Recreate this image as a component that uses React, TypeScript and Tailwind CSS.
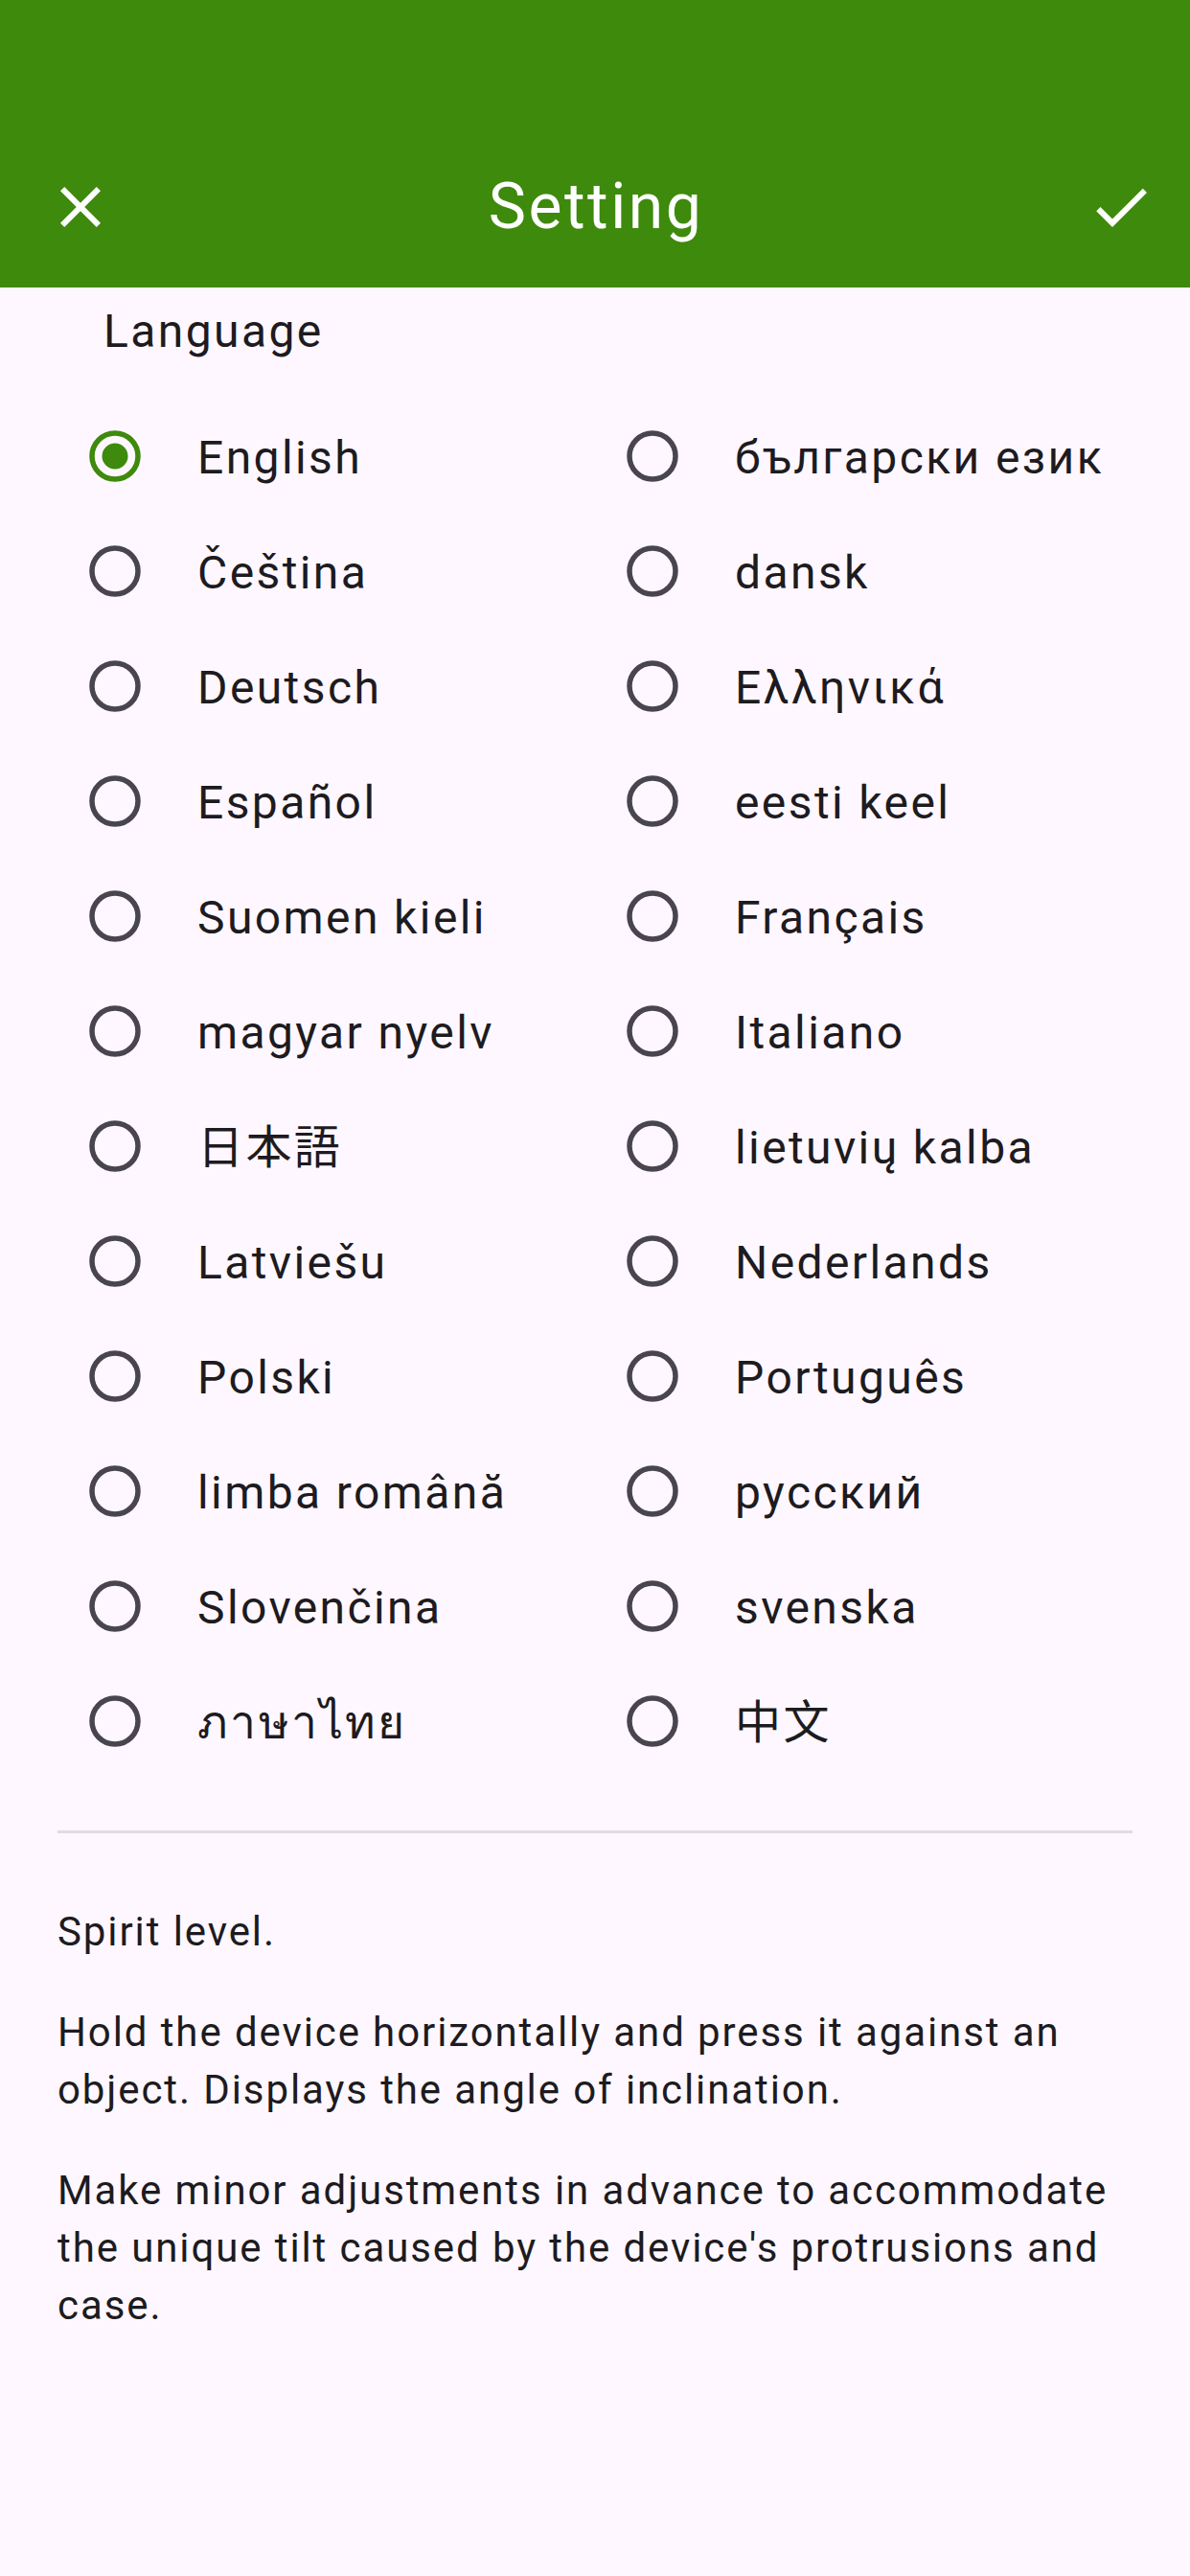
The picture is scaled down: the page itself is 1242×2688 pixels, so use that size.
import { useState } from 'react';

const LANGUAGES: [string, string][] = [
  ['en', 'English'],
  ['bg', 'български език'],
  ['cs', 'Čeština'],
  ['da', 'dansk'],
  ['de', 'Deutsch'],
  ['el', 'Ελληνικά'],
  ['es', 'Español'],
  ['et', 'eesti keel'],
  ['fi', 'Suomen kieli'],
  ['fr', 'Français'],
  ['hu', 'magyar nyelv'],
  ['it', 'Italiano'],
  ['ja', '日本語'],
  ['lt', 'lietuvių kalba'],
  ['lv', 'Latviešu'],
  ['nl', 'Nederlands'],
  ['pl', 'Polski'],
  ['pt', 'Português'],
  ['ro', 'limba română'],
  ['ru', 'русский'],
  ['sk', 'Slovenčina'],
  ['sv', 'svenska'],
  ['th', 'ภาษาไทย'],
  ['zh', '中文'],
];

function Radio({ checked }: { checked: boolean }) {
  return (
    <svg width="54" height="54" viewBox="0 0 54 54" className={checked ? 'text-[#3e8a0c]' : 'text-[#49454f]'}>
      <circle cx="27" cy="27" r="24" fill="none" stroke="currentColor" strokeWidth="5.5" />
      {checked && <circle cx="27" cy="27" r="13.5" fill="currentColor" />}
    </svg>
  );
}

export default function App() {
  const [lang, setLang] = useState('en');

  return (
    <div className="min-h-screen bg-[#fef7ff] font-['Roboto','Noto_Sans_CJK_JP',sans-serif] text-[#1d1b20]">
      <header className="bg-[#3e8a0c] pt-[132px] text-white">
        <div className="grid h-[168px] grid-cols-[168px_1fr_168px] items-center">
          <button type="button" aria-label="close" className="flex h-[168px] w-[168px] items-center justify-center">
            <svg width="72" height="72" viewBox="0 0 24 24" fill="currentColor">
              <path d="M19 6.41 17.59 5 12 10.59 6.41 5 5 6.41 10.59 12 5 17.59 6.41 19 12 13.41 17.59 19 19 17.59 13.41 12z" />
            </svg>
          </button>
          <h1 className="pl-[2px] text-center text-[66px] leading-[88px] tracking-[2.5px]">Setting</h1>
          <div className="flex justify-end">
            <button type="button" aria-label="save" className="flex h-[144px] w-[144px] items-center justify-center">
              <svg width="72" height="72" viewBox="0 0 24 24" fill="currentColor">
                <path d="M9 16.17 4.83 12l-1.42 1.41L9 19 21 7l-1.41-1.41z" />
              </svg>
            </button>
          </div>
        </div>
      </header>

      <main className="px-[60px]">
        <div className="mt-[10px] pl-[48px] text-[48px] leading-[72px] tracking-[2.4px]">Language</div>

        <div className="mt-[34px] grid grid-cols-2">
          {LANGUAGES.map(([code, label]) => (
            <button
              key={code}
              type="button"
              onClick={() => setLang(code)}
              className="flex h-[120px] items-center text-left"
            >
              <span className="flex w-[120px] justify-center">
                <Radio checked={lang === code} />
              </span>
              <span className={`ml-[26px] pt-[3px] text-[48px] leading-[72px] tracking-[2.4px] ${code === 'zh' ? "font-['Roboto','Noto_Sans_CJK_SC',sans-serif]" : ''}`}>
                {label}
              </span>
            </button>
          ))}
        </div>

        <div className="mt-[54px] h-[3px] bg-[#dedcdf]" />

        <div className="mt-[73px] text-[42px] leading-[60px] tracking-[1.9px]">
          <p>Spirit level.</p>
          <p className="mt-[45px]">
            Hold the device horizontally and press it against an object. Displays the angle of inclination.
          </p>
          <p className="mt-[45px]">
            Make minor adjustments in advance to accommodate the unique tilt caused by the device's protrusions and case.
          </p>
        </div>
      </main>
    </div>
  );
}
